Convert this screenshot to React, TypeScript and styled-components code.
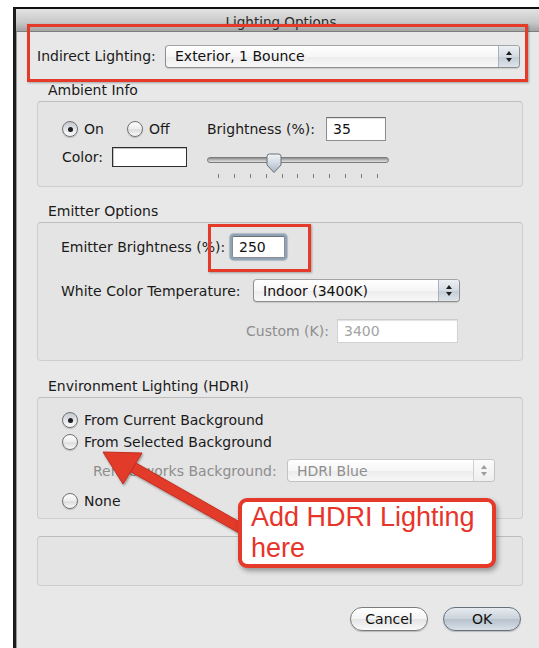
import React from "react";
import styled, { createGlobalStyle } from "styled-components";

const GlobalStyle = createGlobalStyle`
  html, body {
    margin: 0;
    padding: 0;
    background: #ffffff;
    overflow: hidden;
  }
  body {
    font-family: "DejaVu Sans", "Liberation Sans", sans-serif;
    color: #1a1a1a;
  }
`;

const Page = styled.div`
  position: relative;
  width: 539px;
  height: 648px;
  padding: 7px 0 0 13px;
  box-sizing: border-box;
  overflow: hidden;
`;

const Window = styled.div`
  width: 540px;
  height: 660px;
  background: #e8e8e8;
  border-top: 2px solid #111;
  border-left: 3px solid #1c1c1c;
  box-shadow: inset 1px 0 0 #9a9a9a;
`;

const TitleBar = styled.div`
  box-sizing: border-box;
  height: 23px;
  display: flex;
  align-items: center;
  justify-content: center;
  padding: 3px 10px 0 0;
  background: linear-gradient(#e2e2e2, #c9c9c9 60%, #a3a3a3);
  border-bottom: 1px solid #7e7e7e;
  font-size: 13.5px;
  color: #2b2b2b;
`;

const Content = styled.div`
  padding: 12px 33px 0 21px;
`;

const TopRow = styled.div`
  display: flex;
  align-items: center;
  height: 24px;
`;

const Label = styled.span<{ $width?: number; $muted?: boolean }>`
  flex: none;
  width: ${(p) => (p.$width ? `${p.$width}px` : "auto")};
  font-size: 14px;
  white-space: nowrap;
  color: ${(p) => (p.$muted ? "#8d8d8d" : "#1a1a1a")};
`;

const Legend = styled.div<{ $top: number }>`
  margin-top: ${(p) => p.$top}px;
  margin-bottom: 3px;
  padding-left: 11px;
  height: 16px;
  line-height: 16px;
  font-size: 14px;
`;

const GroupBox = styled.div<{ $height: number; $pad?: string; $top?: number }>`
  box-sizing: border-box;
  height: ${(p) => p.$height}px;
  margin-top: ${(p) => p.$top || 0}px;
  padding: ${(p) => p.$pad || "0"};
  border: 1px solid #cdcdcd;
  border-top-color: #bdbdbd;
  border-radius: 4px;
  background: #e4e4e4;
`;

/* popup menu */

const SelectBox = styled.div<{ $width: number; $disabled?: boolean }>`
  flex: none;
  box-sizing: border-box;
  width: ${(p) => p.$width}px;
  height: 23px;
  display: flex;
  align-items: stretch;
  border: 1px solid ${(p) => (p.$disabled ? "#c2c2c2" : "#8e8e8e")};
  border-top-color: ${(p) => (p.$disabled ? "#c8c8c8" : "#a4a4a4")};
  border-radius: 4px;
  background: linear-gradient(#ffffff, #f6f6f6 50%, #ececec 51%, #f8f8f8);
  box-shadow: ${(p) => (p.$disabled ? "none" : "0 1px 1px rgba(0,0,0,0.12)")};
  overflow: hidden;
`;

const SelectText = styled.span<{ $disabled?: boolean }>`
  flex: 1;
  display: flex;
  align-items: center;
  padding-left: 9px;
  font-size: 14px;
  color: ${(p) => (p.$disabled ? "#8e8e8e" : "#111")};
`;

const Stepper = styled.span<{ $disabled?: boolean }>`
  width: 20px;
  display: flex;
  flex-direction: column;
  align-items: center;
  justify-content: center;
  gap: 3px;
  border-left: 1px solid ${(p) => (p.$disabled ? "#d0d0d0" : "#a9b1ba")};
  background: ${(p) =>
    p.$disabled
      ? "linear-gradient(#fbfbfb, #eeeeee)"
      : "linear-gradient(#edf0f4, #d4dbe3 50%, #c2ccd7 51%, #dde3ea)"};
`;

const Caret = styled.span<{ $down?: boolean; $disabled?: boolean }>`
  width: 0;
  height: 0;
  border-left: 3px solid transparent;
  border-right: 3px solid transparent;
  ${(p) =>
    p.$down
      ? `border-top: 4px solid ${p.$disabled ? "#9c9c9c" : "#1d1d1d"};`
      : `border-bottom: 4px solid ${p.$disabled ? "#9c9c9c" : "#1d1d1d"};`}
`;

function Select({ value, width, disabled }: { value: string; width: number; disabled?: boolean }) {
  return (
    <SelectBox $width={width} $disabled={disabled}>
      <SelectText $disabled={disabled}>{value}</SelectText>
      <Stepper $disabled={disabled}>
        <Caret $disabled={disabled} />
        <Caret $down $disabled={disabled} />
      </Stepper>
    </SelectBox>
  );
}

/* text fields */

const TextField = styled.div<{ $width: number; $height?: number; $disabled?: boolean; $focused?: boolean }>`
  flex: none;
  box-sizing: border-box;
  width: ${(p) => p.$width}px;
  height: ${(p) => p.$height || 24}px;
  display: flex;
  align-items: center;
  padding-left: 6px;
  background: #fff;
  font-size: 14px;
  color: ${(p) => (p.$disabled ? "#a3a3a3" : "#111")};
  border: 1px solid ${(p) => (p.$disabled ? "#d3d3d3" : "#8d8d8d")};
  border-top-color: ${(p) => (p.$disabled ? "#cccccc" : "#6f6f6f")};
  box-shadow: ${(p) =>
    p.$focused ? "0 0 0 2px #8ea3b8, 0 0 1px 3px rgba(110,130,150,0.45)" : "inset 0 1px 1px rgba(0,0,0,0.12)"};
  border-radius: ${(p) => (p.$focused ? "2px" : "0")};
`;

/* radio buttons */

const RadioOption = styled.div`
  flex: none;
  height: 16px;
  display: flex;
  align-items: center;
  gap: 6px;
  font-size: 14px;
`;

const RadioDot = styled.span<{ $checked?: boolean }>`
  flex: none;
  position: relative;
  box-sizing: border-box;
  width: 16px;
  height: 16px;
  border-radius: 50%;
  border: 1px solid #717171;
  background: ${(p) =>
    p.$checked
      ? "linear-gradient(#c3c8ce, #e4e7ea 55%, #fbfbfb)"
      : "linear-gradient(#fdfdfd, #ededed 50%, #dcdcdc 55%, #fafafa)"};
  box-shadow: 0 1px 1px rgba(0, 0, 0, 0.18);

  &::after {
    content: "";
    display: ${(p) => (p.$checked ? "block" : "none")};
    position: absolute;
    left: 4.5px;
    top: 4.5px;
    width: 5px;
    height: 5px;
    border-radius: 50%;
    background: #1e1e1e;
  }
`;

function Radio({ label, checked }: { label: string; checked?: boolean }) {
  return (
    <RadioOption>
      <RadioDot $checked={checked} />
      <span>{label}</span>
    </RadioOption>
  );
}

/* ambient info */

const AmbientGrid = styled.div`
  display: grid;
  grid-template-columns: 145px 1fr;
  grid-template-rows: 24px auto;
  row-gap: 6px;
  align-items: start;
`;

const Inline = styled.div<{ $gap?: number }>`
  display: flex;
  align-items: center;
  gap: ${(p) => p.$gap || 0}px;
  height: 24px;
`;

const ColorRow = styled.div`
  display: flex;
  align-items: center;
  height: 20px;
`;

const Swatch = styled.div`
  width: 75px;
  height: 20px;
  box-sizing: border-box;
  background: #fff;
  border: 1px solid #2e2e2e;
  box-shadow: inset 1px 1px 0 #c4c4c4;
`;

const Slider = styled.div`
  position: relative;
  width: 182px;
  height: 32px;
`;

const Track = styled.div`
  margin-top: 10px;
  height: 6px;
  box-sizing: border-box;
  border-radius: 3px;
  border: 1px solid #7b7b7b;
  background: linear-gradient(#8d8d8d, #c4c4c4 60%, #dedede);
`;

const Ticks = styled.div`
  display: flex;
  justify-content: space-between;
  padding: 0 11px;
  margin-top: 11px;
`;

const Tick = styled.span`
  width: 1px;
  height: 4px;
  background: #7a7a7a;
`;

const Thumb = styled.svg`
  position: absolute;
  top: 6px;
`;

function BrightnessSlider({ value }: { value: number }) {
  const center = 11 + (160 * value) / 100;
  return (
    <Slider>
      <Track />
      <Ticks>
        {Array.from({ length: 11 }).map((_, i) => (
          <Tick key={i} />
        ))}
      </Ticks>
      <Thumb width="18" height="21" viewBox="0 0 18 21" style={{ left: center - 9 }}>
        <defs>
          <linearGradient id="thumbFill" x1="0" y1="0" x2="0" y2="1">
            <stop offset="0" stopColor="#f1f4f7" />
            <stop offset="0.5" stopColor="#d0d9e2" />
            <stop offset="1" stopColor="#a9b6c3" />
          </linearGradient>
        </defs>
        <path
          d="M2 3.5 Q2 1 4.5 1 H13.5 Q16 1 16 3.5 V12 L9 19.5 L2 12 Z"
          fill="url(#thumbFill)"
          stroke="#66707b"
          strokeWidth="1"
        />
      </Thumb>
    </Slider>
  );
}

/* emitter + hdri rows */

const Stack = styled.div`
  display: flex;
  flex-direction: column;
`;

const FieldRow = styled.div<{ $top?: number; $indent?: number }>`
  display: flex;
  align-items: center;
  margin-top: ${(p) => p.$top || 0}px;
  padding-left: ${(p) => p.$indent || 0}px;
`;

/* footer buttons */

const ButtonRow = styled.div`
  display: flex;
  justify-content: flex-end;
  gap: 15px;
  margin-top: 21px;
  margin-right: 2px;
`;

const PushButton = styled.button<{ $primary?: boolean }>`
  width: 78px;
  height: 24px;
  border-radius: 12px;
  font-family: inherit;
  font-size: 14px;
  color: #111;
  padding: 0;
  border: 1px solid ${(p) => (p.$primary ? "#67717d" : "#7c7c7c")};
  background: ${(p) =>
    p.$primary
      ? "linear-gradient(#e6ebf0, #c9d1da 50%, #b6c1cc 51%, #d9e0e7)"
      : "linear-gradient(#ffffff, #f4f4f4 50%, #e4e4e4 51%, #f9f9f9)"};
  box-shadow: 0 1px 1px rgba(0, 0, 0, 0.2);
`;

/* annotations drawn over the dialog */

const Highlight = styled.div<{ $x: number; $y: number; $w: number; $h: number }>`
  position: absolute;
  left: ${(p) => p.$x}px;
  top: ${(p) => p.$y}px;
  width: ${(p) => p.$w}px;
  height: ${(p) => p.$h}px;
  box-sizing: border-box;
  border: 3px solid #e5392a;
  box-shadow: 1px 1px 2px rgba(0, 0, 0, 0.3);
  pointer-events: none;
`;

const ArrowLayer = styled.svg`
  position: absolute;
  left: 0;
  top: 0;
  pointer-events: none;
`;

const Callout = styled.div`
  position: absolute;
  left: 238px;
  top: 498px;
  width: 258px;
  height: 70px;
  box-sizing: border-box;
  padding-left: 9px;
  background: #fff;
  border: 4px solid #e5392a;
  border-radius: 9px;
  box-shadow: 2px 3px 5px rgba(0, 0, 0, 0.35);
  font-family: "Liberation Sans", Arial, sans-serif;
  font-size: 27px;
  line-height: 31px;
  color: #e8352a;
`;

export default function App() {
  return (
    <>
      <GlobalStyle />
      <Page>
        <Window>
          <TitleBar>Lighting Options</TitleBar>
          <Content>
            <TopRow>
              <Label $width={128}>Indirect Lighting:</Label>
              <Select value="Exterior, 1 Bounce" width={355} />
            </TopRow>

            <Legend $top={14}>Ambient Info</Legend>
            <GroupBox $height={86} $pad="15px 0 0 24px">
              <AmbientGrid>
                <Inline $gap={23}>
                  <Radio label="On" checked />
                  <Radio label="Off" />
                </Inline>
                <Inline>
                  <Label $width={119}>Brightness (%):</Label>
                  <TextField $width={60}>35</TextField>
                </Inline>
                <ColorRow>
                  <Label $width={50}>Color:</Label>
                  <Swatch />
                </ColorRow>
                <BrightnessSlider value={35} />
              </AmbientGrid>
            </GroupBox>

            <Legend $top={16}>Emitter Options</Legend>
            <GroupBox $height={139} $pad="13px 0 0 23px">
              <Stack>
                <FieldRow>
                  <Label $width={171}>Emitter Brightness (%):</Label>
                  <TextField $width={53} $height={22} $focused>
                    250
                  </TextField>
                </FieldRow>
                <FieldRow $top={21}>
                  <Label $width={192}>White Color Temperature:</Label>
                  <Select value="Indoor (3400K)" width={207} />
                </FieldRow>
                <FieldRow $top={17} $indent={185}>
                  <Label $width={91} $muted>
                    Custom (K):
                  </Label>
                  <TextField $width={121} $disabled>
                    3400
                  </TextField>
                </FieldRow>
              </Stack>
            </GroupBox>

            <Legend $top={17}>Environment Lighting (HDRI)</Legend>
            <GroupBox $height={122} $pad="14px 0 0 24px">
              <Stack>
                <Radio label="From Current Background" checked />
                <FieldRow $top={6}>
                  <Radio label="From Selected Background" />
                </FieldRow>
                <FieldRow $top={9} $indent={31}>
                  <Label $width={194} $muted>
                    Renderworks Background:
                  </Label>
                  <Select value="HDRI Blue" width={208} disabled />
                </FieldRow>
                <FieldRow $top={11}>
                  <Radio label="None" />
                </FieldRow>
              </Stack>
            </GroupBox>

            <GroupBox $height={50} $top={17} />

            <ButtonRow>
              <PushButton>Cancel</PushButton>
              <PushButton $primary>OK</PushButton>
            </ButtonRow>
          </Content>
        </Window>

        <Highlight $x={27} $y={24} $w={501} $h={58} />
        <Highlight $x={208} $y={224} $w={103} $h={48} />

        <ArrowLayer width="539" height="648" viewBox="0 0 539 648">
          <defs>
            <filter id="arrowShadow" x="-10%" y="-10%" width="130%" height="130%">
              <feDropShadow dx="1" dy="1.5" stdDeviation="1.2" floodColor="#000" floodOpacity="0.35" />
            </filter>
          </defs>
          <g filter="url(#arrowShadow)" fill="#e23b2b" stroke="#c42d1f" strokeWidth="1">
            <path d="M252 529 L248 538 L131 472 L136 463 Z" />
            <path d="M103 452 L142 453 L123 484 Z" />
          </g>
        </ArrowLayer>

        <Callout>
          Add HDRI Lighting
          <br />
          here
        </Callout>
      </Page>
    </>
  );
}
